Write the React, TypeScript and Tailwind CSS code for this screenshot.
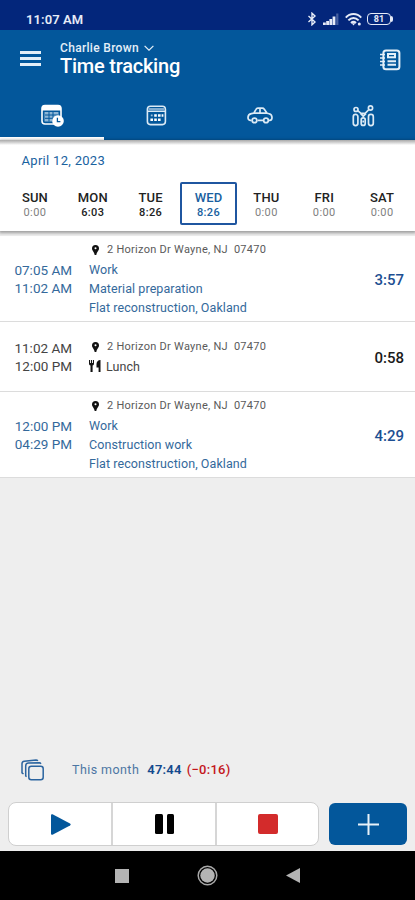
import type { ReactNode } from "react";

type Day = { name: string; time: string; active?: boolean }
type Entry = { from: string; to: string; total: string; lines: string[]; isBreak?: boolean }

const days: Array<Day> = [
    { name: 'SUN', time: '0:00' },
    { name: 'MON', time: '6:03' },
    { name: 'TUE', time: '8:26' },
    { name: 'WED', time: '8:26', active: true },
    { name: 'THU', time: '0:00' },
    { name: 'FRI', time: '0:00' },
    { name: 'SAT', time: '0:00' },
]

const entries: Array<Entry> = [
    { from: '07:05 AM', to: '11:02 AM', total: '3:57', lines: ['Work', 'Material preparation', 'Flat reconstruction, Oakland'] },
    { from: '11:02 AM', to: '12:00 PM', total: '0:58', lines: ['Lunch'], isBreak: true },
    { from: '12:00 PM', to: '04:29 PM', total: '4:29', lines: ['Work', 'Construction work', 'Flat reconstruction, Oakland'] },
]

const StatusBar = () => (
    <div className="flex h-[30px] shrink-0 items-center justify-between bg-[#03267b] pl-[26px] pr-[22px] pt-2 text-[#e6ebf7]">
        <span className="text-[13px] font-semibold leading-none tracking-[0.1px]">11:07 AM</span>
        <div className="flex items-center">
            <svg className="h-3.5 w-2.5" viewBox="0 0 10 14" fill="none" stroke="currentColor" strokeWidth="1.4">
                <path d="M1.5 4 8 10 5 12.8V1.2L8 4 1.5 10" />
            </svg>
            <svg className="ml-1.5 h-3 w-4" viewBox="0 0 16 12" fill="currentColor">
                <rect x="0" y="9.5" width="2.8" height="2.5" />
                <rect x="3.2" y="8" width="2.8" height="4" />
                <rect x="6.4" y="6" width="2.8" height="6" />
                <rect x="9.6" y="3.5" width="2.8" height="8.5" />
                <rect x="13.2" y="0.5" width="2.2" height="11.5" opacity="0.3" />
            </svg>
            <svg className="ml-1.5 h-[13px] w-[17px]" viewBox="0 0 17 13" fill="none" stroke="currentColor" strokeWidth="2">
                <path d="M.8 4.6C5-.1 12-.1 16.2 4.6M3.4 7.4c3-3.2 7.2-3.2 10.2 0M6 10c1.6-1.5 3.4-1.5 5 0" />
                <path d="m8.5 12.5-1.8-2.2h3.6z" fill="currentColor" stroke="none" />
                <circle cx="14.3" cy="11" r="1.5" fill="currentColor" stroke="none" />
            </svg>
            <div className="ml-[5px] flex h-3 w-6 items-center justify-center rounded-[4px] border-[1.5px] border-current text-[9px] font-bold leading-none">
                81
            </div>
            <span className="h-1.5 w-[2px] rounded-r bg-current" />
        </div>
    </div>
)

const TrackIcon = () => (
    <svg className="h-[23px] w-[23px]" viewBox="0 0 23 23" fill="none">
        <rect x="1" y="1.5" width="19" height="18.5" rx="3" stroke="#fff" strokeWidth="1.6" />
        <path d="M1 6.5V4a3 3 0 0 1 3-3h13a3 3 0 0 1 3 3v2.500z" fill="#fff" />
        <path d="M3.500 8h14v9.500h-14z" fill="#8db6d6" />
        <path d="M4 11h13M4 14.300h10M8 8v9.500M12 8v9.500" stroke="#03579b" strokeWidth="1" />
        <circle cx="17" cy="17" r="5.800" fill="#fff" />
        <path d="M16.400 13.700v4h3" stroke="#03579b" strokeWidth="1.300" />
    </svg>
)

const CalendarIcon = () => (
    <svg className="h-[21px] w-[21px]" viewBox="0 0 21 21" fill="none">
        <rect x="1.400" y="1.200" width="18" height="18.400" rx="3" stroke="#dceaf5" strokeWidth="1.600" />
        <path d="M2.500 3h16v2.300h-16z" fill="#7fabd0" />
        <path d="M1.500 6.300h18" stroke="#dceaf5" strokeWidth="1.400" />
        <path d="M8.200 10.400h2.600m1.200 0h2.600m1 0h1.800M4.400 14.700H7m1.200 0h2.600m1.200 0h2.600" stroke="#fff" strokeWidth="2.500" />
        <path d="M4.800 10.400h1.800" stroke="#9fc1dd" strokeWidth="1.800" />
    </svg>
)

const CarIcon = () => (
    <svg className="h-[17px] w-[26px]" viewBox="0 0 26 17" fill="none" stroke="#dceaf5" strokeWidth="1.700" strokeLinejoin="round">
        <path d="M4.600 13.400H3.200C1.800 13.200 1 12 1 10.500c0-2 1.400-3.400 3.400-3.800L6.800 6.200 9 2.300C9.400 1.500 10 1.200 10.800 1.200h4.400c.9 0 1.600.3 2.100 1l2.800 4 2 .5c2 .5 2.900 1.900 2.900 3.800s-.8 2.800-2.200 2.900h-1M10.500 13.400h5.800M6.800 6.200h13.300M13 1.500v4.500" />
        <circle cx="7.500" cy="13.400" r="2.300" />
        <circle cx="19" cy="13.400" r="2.300" />
    </svg>
)

const TeamIcon = () => (
    <svg className="h-[22px] w-[23px]" viewBox="0 0 23 22" fill="none" stroke="#dceaf5" strokeWidth="1.700">
        <circle cx="4" cy="4.500" r="2" />
        <circle cx="18.500" cy="3" r="2.100" />
        <path d="M5.700 5.700 9 8.300h4.200l3.700-3.800M8.500 8.300l2.800 2.900 2.800-2.900" />
        <rect x="1.300" y="9.400" width="4.600" height="11.200" rx="2.300" />
        <rect x="9.200" y="12.800" width="4" height="7.600" rx="2" />
        <rect x="16.500" y="9.400" width="4.800" height="11.200" rx="2.300" />
        <path d="M11.200 15.500v2" />
    </svg>
)

const NotebookIcon = () => (
    <svg className="h-[22px] w-[21px]" viewBox="0 0 21 22" fill="none" stroke="#e4eff8" strokeWidth="2">
        <rect x="3.400" y="1.500" width="16" height="18.800" rx="2.600" />
        <path d="M0 5.500h5M0 9h5M0 12.500h5M0 16h5" strokeWidth="1.600" />
        <rect x="8" y="5" width="7" height="3.300" />
        <path d="M7.500 12.300h8.500M7.500 15.700h8.500" />
    </svg>
)

const Header = () => {
    const tabs: Array<ReactNode> = [<TrackIcon />, <CalendarIcon />, <CarIcon />, <TeamIcon />]

    return (
        <header className="flex h-[110px] shrink-0 flex-col bg-[#03579b] text-white">
            <div className="flex h-[60px] items-start px-5">
                <div className="mt-[21px] flex w-[21px] flex-col gap-[3.5px]">
                    <span className="h-[2.5px] bg-[#e4eff8]" />
                    <span className="h-[2.5px] bg-[#e4eff8]" />
                    <span className="h-[2.5px] bg-[#e4eff8]" />
                </div>
                <div className="ml-[19px] mt-[11px] flex-1">
                    <div className="flex items-center text-[12px] font-medium leading-[14px] tracking-[0.32px] text-[#e4eff8]">
                        Charlie Brown
                        <svg className="ml-[5px] h-1.5 w-2.5" viewBox="0 0 10 6" fill="none" stroke="currentColor" strokeWidth="1.2">
                            <path d="m.6.8 4.400 4.400L9.400.8" />
                        </svg>
                    </div>
                    <h1 className="text-[20px] font-medium leading-[23px] tracking-[-0.23px]">Time tracking</h1>
                </div>
                <div className="-mr-[7px] mt-[19px] w-[22px]"><NotebookIcon /></div>
            </div>
            <nav className="flex flex-1">
                {tabs.map((icon, i) => (
                    <button key={i} type="button"
                        className={`flex flex-1 items-center justify-center border-b-[3px] pl-px pt-1 ${i === 0 ? 'border-white' : 'border-transparent'}`}>
                        {icon}
                    </button>
                ))}
            </nav>
        </header>
    )
}

const WeekStrip = () => (
    <section className="z-10 h-[91px] shrink-0 bg-white shadow-[0_1px_3px_1px_rgba(0,0,0,0.35)]">
        <div className="h-[42px] bg-gradient-to-b from-[#a9a9a9] via-white via-[12%] to-white pl-[21.5px] pt-[12.5px] text-[13px] leading-4 tracking-[0.3px] text-[#1a629f]">
            April 12, 2023
        </div>
        <div className="flex pl-1.5 pr-1">
            {days.map((day) => (
                <div key={day.name}
                    className={`flex h-[43px] flex-1 flex-col items-center rounded-[2px] border-2 pt-1.5 ${day.active ? 'border-[#1f56a0] text-[#1a5fa0]' : 'border-transparent text-[#222]'}`}>
                    <span className="text-[13px] font-medium leading-[15px] tracking-[0.15px]">{day.name}</span>
                    <span className={`text-[11px] leading-[15px] tracking-[0.4px] ${day.time === '0:00' ? 'text-[#808080]' : 'font-medium'}`}>{day.time}</span>
                </div>
            ))}
        </div>
    </section>
)

const PinIcon = () => (
    <svg className="ml-[3px] mr-2 h-2.5 w-[7px]" viewBox="0 0 7 10">
        <path d="M3.500 0A3.500 3.500 0 0 0 0 3.500C0 5.600 2 6.500 2.700 10h1.600C5 6.500 7 5.600 7 3.500A3.500 3.500 0 0 0 3.500 0z" fill="#111" />
        <circle cx="3.500" cy="3.300" r="1" fill="#fff" />
    </svg>
)

const ForkIcon = () => (
    <svg className="mr-[5px] h-3 w-3" viewBox="0 0 12 12" fill="#111">
        <path d="M0 0h1v3h.9V0h1.200v3H4V0h1v3.500C5 4.800 4.300 5.300 3.600 5.500V12H1.500V5.500C.7 5.300 0 4.800 0 3.500zM11.500 0v12H9.600V7.500H7.500V4c0-2.300 1.500-4 4-4z" />
    </svg>
)

const EntryRow = ({ entry }: { entry: Entry }) => (
    <div className={`flex items-center border-b border-[#dcdcdc] bg-white pl-3.5 pr-[11px] ${entry.isBreak ? 'h-[70px] text-[#444]' : 'h-[86px] text-[#34699b]'}`}>
        <div className="w-[58px] shrink-0 text-right text-[13.5px] leading-[18px]">
            <div>{entry.from}</div>
            <div>{entry.to}</div>
        </div>
        <div className="ml-[17px] flex-1 text-[12.5px] leading-[19px] tracking-[0.08px]">
            <div className="flex items-center whitespace-pre text-[11px] leading-[19.5px] tracking-[0.27px] text-[#5a5a5a]">
                <PinIcon />
                2 Horizon Dr Wayne, NJ  07470
            </div>
            {entry.lines.map((line) => (
                <div key={line} className="flex items-center">
                    {entry.isBreak && <ForkIcon />}
                    {line}
                </div>
            ))}
        </div>
        <div className={`pt-[3px] text-[15px] font-medium ${entry.isBreak ? 'text-[#1a1a1a]' : 'text-[#1d4f92]'}`}>{entry.total}</div>
    </div>
)

const Footer = () => (
    <footer className="mt-auto">
        <div className="flex h-[33px] items-center pl-[21px] pt-px text-[12.5px]">
            <svg className="h-[23px] w-6" viewBox="0 0 24 23" fill="none" stroke="#2b649f" strokeWidth="1.5">
                <rect x="7.800" y="7.300" width="14.400" height="13.400" rx="2.500" />
                <path d="M5.600 17.700 4.700 17V7c0-1.800.9-2.800 2.600-2.900l11-.3c.8 0 1.300.4 1.600 1" />
                <path d="M2.500 15 1 13.800V4.800c0-1.600.8-2.400 2.300-2.600l11.700-1.200c.9 0 1.500.4 1.800 1" />
            </svg>
            <span className="ml-[27px] tracking-[0.43px] text-[#4c76a3]">This month</span>
            <span className="ml-2 text-[13px] font-semibold tracking-[0.25px] text-[#13498d]">47:44</span>
            <span className="ml-[5px] text-[13px] font-medium tracking-[0.28px] text-[#c4161c]">(−0:16)</span>
        </div>
        <div className="flex gap-2.5 px-2 pb-[5px] pt-4">
            <div className="flex h-[44px] w-[312px] divide-x-2 divide-[#d6d6d6] rounded-[8px] border border-[#cfcfcf] bg-white">
                <button type="button" className="flex flex-1 items-center justify-center pl-0.5">
                    <svg className="h-[21px] w-5" viewBox="0 0 20 21" fill="#03579b">
                        <path d="M0 1.500C0 .4 1 0 2 .5l17 9c.9.5.9 1.500 0 2l-17 9c-1 .5-2 .1-2-1z" />
                    </svg>
                </button>
                <button type="button" className="flex flex-1 items-center justify-center gap-1 pl-px">
                    <span className="h-5 w-2 rounded-[1.5px] bg-black" />
                    <span className="h-5 w-[7.5px] rounded-[1.5px] bg-black" />
                </button>
                <button type="button" className="flex flex-1 items-center justify-center pl-px">
                    <span className="size-[19.5px] rounded-[2px] bg-[#d32b2b]" />
                </button>
            </div>
            <button type="button" className="mt-px flex h-[42px] w-[78px] items-center justify-center rounded-[6px] bg-[#03579b]">
                <svg className="size-[21px]" viewBox="0 0 21 21" stroke="#e8f1f8" strokeWidth="2">
                    <path d="M10.500 0v21M0 10.500h21" />
                </svg>
            </button>
        </div>
    </footer>
)

const NavigationBar = () => (
    <div className="flex h-[49px] shrink-0 items-center justify-center bg-black">
        <span className="h-3.5 w-[14px] bg-[#b4b4b4]" />
        <svg className="ml-[68px] size-[21px]" viewBox="0 0 21 21">
            <circle cx="10.500" cy="10.500" r="9.300" fill="none" stroke="#a8a8a8" strokeWidth="1.5" />
            <circle cx="10.500" cy="10.500" r="7.200" fill="#b4b4b4" />
        </svg>
        <svg className="ml-[68px] h-[15px] w-[14px]" viewBox="0 0 14 15" fill="#b4b4b4">
            <path d="M14 0v15L0 7.500z" />
        </svg>
    </div>
)

export default function App() {
    return (
        <div className="flex h-[900px] w-[415px] flex-col overflow-hidden bg-[#eeeeee] font-[Roboto,sans-serif]">
            <StatusBar />
            <Header />
            <WeekStrip />
            <main className="flex flex-1 flex-col pt-[5px]">
                {entries.map((entry) => (
                    <EntryRow key={entry.from} entry={entry} />
                ))}
                <Footer />
            </main>
            <NavigationBar />
        </div>
    )
}
